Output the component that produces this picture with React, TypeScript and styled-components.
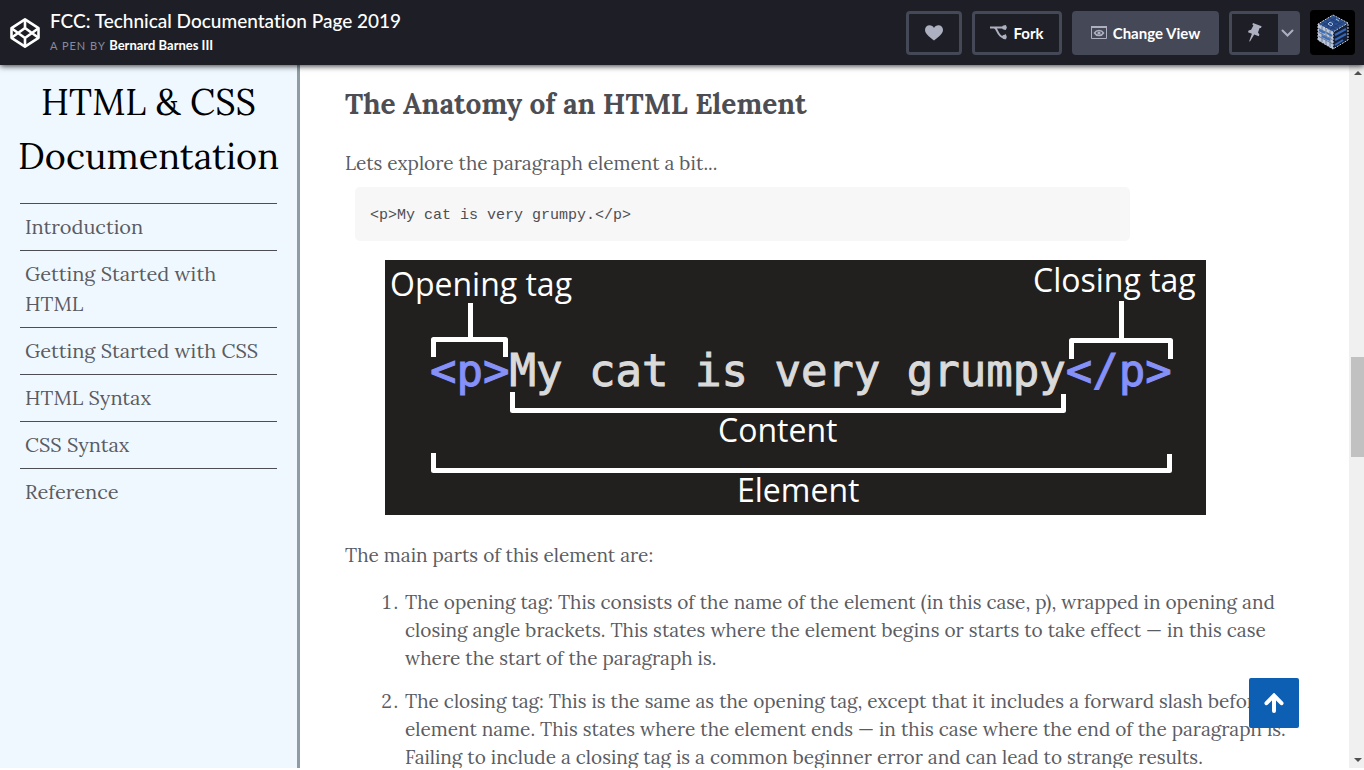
import React from "react";
import styled, { createGlobalStyle } from "styled-components";

const serif = `Lora, "Liberation Serif", serif`;
const sans = `Lato, "Liberation Sans", sans-serif`;

const GlobalStyle = createGlobalStyle`
  *, *::before, *::after { box-sizing: border-box; }
  body { margin: 0; background: #fff; }
  h1, h2, p, ul, ol, pre, figure { margin: 0; padding: 0; }
  button { font: inherit; cursor: pointer; }
`;

const Page = styled.div`
  height: 100vh;
  display: flex;
  flex-direction: column;
  overflow: hidden;
  padding-bottom: 2px;
`;

const TopBar = styled.header`
  flex: none;
  height: 65px;
  display: flex;
  align-items: center;
  justify-content: space-between;
  padding: 0 9px 0 10px;
  background: #1e1f26;
  box-shadow: 0 1px 6px rgba(0, 0, 0, 0.8);
  font-family: ${sans};
  font-variant-ligatures: none;
  color: #fff;
  z-index: 1;
`;

const Brand = styled.div`
  display: flex;
  align-items: center;
  gap: 10px;
`;

const LogoLink = styled.a`
  display: flex;
  color: #fff;
`;

const PenTitle = styled.h1`
  font-size: 19px;
  line-height: 24px;
  font-weight: 500;
`;

const Byline = styled.p`
  font-size: 11px;
  line-height: 20px;
  letter-spacing: 1px;
  margin-top: 2px;
  color: #868ca0;
`;

const Author = styled.a`
  font-size: 13px;
  letter-spacing: 0;
  font-weight: 700;
  color: #fff;
  text-decoration: none;
`;

const Actions = styled.div`
  display: flex;
  align-items: center;
  gap: 10px;
`;

const BarButton = styled.button<{ $filled?: boolean; $width: number }>`
  display: flex;
  align-items: center;
  justify-content: center;
  gap: 6px;
  width: ${(p) => p.$width}px;
  height: 44px;
  padding: 0;
  border: 3px solid #444857;
  border-radius: 4px;
  background: ${(p) => (p.$filled ? "#444857" : "#1e1f26")};
  color: #fff;
  font-size: 15px;
  font-weight: 700;

  svg { color: #adb0c0; }
`;

const Split = styled.div`
  display: flex;
  width: 71px;
  height: 44px;
  border: 3px solid #444857;
  border-radius: 4px;
  background: #444857;
`;

const SplitPart = styled.button<{ $dark?: boolean }>`
  display: flex;
  align-items: center;
  justify-content: center;
  flex: ${(p) => (p.$dark ? "1" : "0 0 19px")};
  padding: 0;
  border: 0;
  background: ${(p) => (p.$dark ? "#1e1f26" : "#444857")};
  color: #adb0c0;
`;

const Avatar = styled.button`
  display: flex;
  width: 45px;
  height: 45px;
  padding: 0;
  border: 0;
  border-radius: 4px;
  background: #000;
  overflow: hidden;
`;

const Body = styled.div`
  flex: 1;
  min-height: 0;
  display: flex;
`;

const Sidebar = styled.nav`
  flex: none;
  width: 300px;
  padding: 10px 20px;
  border-right: 3px solid #8f9ca3;
  background: #f0f8ff;
  font-family: ${serif};
`;

const SidebarTitle = styled.h2`
  margin: 0 -5px 20px;
  font-size: 36px;
  line-height: 54px;
  font-weight: 400;
  text-align: center;
  color: #000;
`;

const NavList = styled.ul`
  list-style: none;
`;

const NavItem = styled.li`
  padding: 8px 5px;
  border-top: 1px solid #4d4e53;
`;

const NavLink = styled.a`
  font-size: 20px;
  line-height: 30px;
  color: #5b5c62;
  text-decoration: none;
  display: block;
`;

const Main = styled.main`
  flex: 1;
  min-width: 0;
  padding: 20px 40px 0 45px;
  overflow: hidden;
  background: #fff;
  font-family: ${serif};
  color: #5b5c62;
`;

const SectionTitle = styled.h2`
  font-size: 28px;
  line-height: 38px;
  font-weight: 700;
  color: #4d4e53;
  margin-bottom: 26px;
`;

const Text = styled.p`
  font-size: 19px;
  line-height: 28px;
`;

const CodeBlock = styled.pre`
  max-width: 775px;
  margin: 10px 10px 19px;
  padding: 19px 15px 15px;
  border-radius: 5px;
  background: #f7f7f7;
  color: #4d4e53;
  font-family: Consolas, "Liberation Mono", monospace;
  font-size: 15px;
  line-height: 20px;
`;

const Figure = styled.figure`
  max-width: 821px;
  margin: 0 0 26px 40px;

  svg { display: block; width: 100%; height: auto; }
`;

const Parts = styled.ol`
  margin-top: 19px;
  padding-left: 60px;
  font-size: 19px;
  line-height: 28px;

  li { margin-bottom: 15px; }
`;

const Scrollbar = styled.div`
  flex: none;
  width: 15px;
  display: flex;
  flex-direction: column;
  align-items: flex-end;
  padding: 5px 0;
  background: #f0f0f0;

  svg { margin-right: 2px; }
`;

const TrackSpace = styled.div<{ $grow: number }>`
  flex: ${(p) => p.$grow} 1 0;
`;

const Thumb = styled.div`
  width: 13px;
  height: 100px;
  background: #c1c1c1;
`;

const ToTop = styled.a`
  position: fixed;
  right: 65px;
  bottom: 42px;
  width: 50px;
  height: 50px;
  display: flex;
  align-items: center;
  justify-content: center;
  border-radius: 2px;
  background: #0d5fb3;
`;

const Logo = () => (
  <svg width="30" height="32" viewBox="0 0 30 32" fill="none" stroke="currentColor" strokeWidth="2.600" strokeLinejoin="round">
    <path d="M15 2.300 28.500 11.200V20.800L15 29.700 1.500 20.800V11.200Z" />
    <path d="M15 2.500V11M15 21V29.500M1.500 11.200 15 21 28.500 11.200M1.500 20.800 15 11 28.500 20.800" />
  </svg>
);

const Heart = () => (
  <svg width="18" height="16" viewBox="0 0 18 16" fill="currentColor">
    <path d="M9 15.500C7 13.500 0 9.500 0 5 0 2.200 2.100.300 4.500.300 6.500.300 8.200 1.400 9 3 9.800 1.400 11.500.300 13.500.300 15.900.300 18 2.200 18 5c0 4.500-7 8.500-9 10.500Z" />
  </svg>
);

const ForkIcon = () => (
  <svg width="17" height="15" viewBox="0 0 17 15" fill="none" stroke="currentColor" strokeWidth="2">
    <path d="M0 2.500H13M4 2.500C7.500 2.500 7.500 12 13 12" />
    <path d="M11 2.500 16 0V5ZM11 12 16 9V14.500Z" fill="currentColor" stroke="none" />
    <circle cx="14.500" cy="2.500" r="2.300" fill="currentColor" stroke="none" />
    <circle cx="14.500" cy="12" r="2.300" fill="currentColor" stroke="none" />
  </svg>
);

const ViewIcon = () => (
  <svg width="16" height="13" viewBox="0 0 16 13" fill="none" stroke="currentColor">
    <path d="M.500 1.500H15.500V12.500H.500Z" />
    <path d="M0 1H16" strokeWidth="2" />
    <path d="M3.500 7C5.500 3.700 10.500 3.700 12.500 7 10.500 10.300 5.500 10.300 3.500 7Z" strokeWidth="1.500" />
    <circle cx="8" cy="7" r="1.600" fill="currentColor" stroke="none" />
  </svg>
);

const PinIcon = () => (
  <svg width="14" height="19" viewBox="0 0 14 19" fill="currentColor">
    <path d="M5 0 13.600 3.200 13 5 11.600 4.900 10 9.400 11.400 11.500 10.800 13.200 6.200 11.600 2 18.500 1.200 18.200 3.900 10.800 0 9.300.600 7.600 3.100 6.800 5.400 2.400 4.400 1.500Z" />
  </svg>
);

const Chevron = () => (
  <svg width="13" height="8" viewBox="0 0 13 8" fill="none" stroke="currentColor" strokeWidth="2" strokeLinecap="round">
    <path d="M1.500 1.500 6.500 6.500 11.500 1.500" />
  </svg>
);

const Cube = () => (
  <svg width="45" height="45" viewBox="0 0 45 45">
    <path d="M23 5 38 13 23 22 8 14Z" fill="#2b4f8f" />
    <path d="M8 14 23 22V39L8 30Z" fill="#b9c6dc" />
    <path d="M38 13 23 22V39L38 30Z" fill="#14203a" />
    <path d="M12 12 27 20M15 10 30 18M19 8 34 16M27 7 12 16M31 9 16 18M34 11 19 20" stroke="#1f3f78" strokeWidth="1" />
    <path d="M18 14 20 12 23 14 21 16ZM26 9 29 11" stroke="#a9bde0" strokeWidth="1" fill="none" />
    <path d="M8 18 23 26M8 22 23 30M8 26 23 34M12 16V32M16 18V35M20 20V37" stroke="#6a7a96" strokeWidth="1" />
    <path d="M9 20 15 23M12 26 20 30M17 23 22 26" stroke="#3f6fb8" strokeWidth="2" />
    <path d="M25 25 36 19M25 30 36 24M25 35 33 30" stroke="#3767b5" strokeWidth="2" />
    <path d="M23 5 38 13V30L23 39 8 30V14ZM8 14 23 22 38 13M23 22V39" fill="none" stroke="#c7ccd6" strokeWidth="1" strokeDasharray="2 1" />
  </svg>
);

const ElementDiagram = () => (
  <svg viewBox="0 0 821 255" role="img" aria-label="Parts of an HTML element">
    <rect width="821" height="255" fill="#221f1f" />
    <g fill="none" stroke="#fff" strokeWidth="5" strokeLinejoin="round">
      <path d="M48.500 97V79.500H120.500V97M85.500 43V79.500" />
      <path d="M686.500 99V80.500H785.500V99M736.500 41V80.500" />
      <path d="M127.500 132V150.500H678.500V134" />
      <path d="M48.500 193V210.500H784.500V194" />
    </g>
    <g fill="#fff" fontFamily="'Open Sans', sans-serif" fontSize="32">
      <text x="5" y="36">Opening tag</text>
      <text x="648" y="32">Closing tag</text>
      <text x="333" y="182">Content</text>
      <text x="352" y="242">Element</text>
    </g>
    <g fontFamily="'DejaVu Sans Mono', monospace" fontSize="44" strokeWidth="1">
      <text x="45" y="126" fill="#dadada" stroke="#dadada">
        <tspan fill="#8590f8" stroke="#8590f8">{"<p>"}</tspan>My cat is very grumpy<tspan fill="#8590f8" stroke="#8590f8">{"</p>"}</tspan>
      </text>
    </g>
  </svg>
);

const links: { id: string; label: string }[] = [
  { id: "introduction", label: "Introduction" },
  { id: "start-html", label: "Getting Started with HTML" },
  { id: "start-css", label: "Getting Started with CSS" },
  { id: "html-syntax", label: "HTML Syntax" },
  { id: "css-syntax", label: "CSS Syntax" },
  { id: "reference", label: "Reference" },
];

export default function App() {
  return (
    <Page>
      <GlobalStyle />
      <TopBar>
        <Brand>
          <LogoLink href="#home" aria-label="Home"><Logo /></LogoLink>
          <div>
            <PenTitle>FCC: Technical Documentation Page 2019</PenTitle>
            <Byline>A PEN BY <Author href="#author">Bernard Barnes III</Author></Byline>
          </div>
        </Brand>
        <Actions>
          <BarButton $width={56} aria-label="Love"><Heart /></BarButton>
          <BarButton $width={90}><ForkIcon />Fork</BarButton>
          <BarButton $width={147} $filled><ViewIcon />Change View</BarButton>
          <Split>
            <SplitPart $dark aria-label="Pin"><PinIcon /></SplitPart>
            <SplitPart aria-label="More pin options"><Chevron /></SplitPart>
          </Split>
          <Avatar aria-label="Account"><Cube /></Avatar>
        </Actions>
      </TopBar>
      <Body>
        <Sidebar>
          <SidebarTitle>HTML &amp; CSS Documentation</SidebarTitle>
          <NavList>
            {links.map((l) => (
              <NavItem key={l.id}><NavLink href={`#${l.id}`}>{l.label}</NavLink></NavItem>
            ))}
          </NavList>
        </Sidebar>
        <Main>
          <SectionTitle>The Anatomy of an HTML Element</SectionTitle>
          <Text>Lets explore the paragraph element a bit...</Text>
          <CodeBlock>{"<p>My cat is very grumpy.</p>"}</CodeBlock>
          <Figure><ElementDiagram /></Figure>
          <Text>The main parts of this element are:</Text>
          <Parts>
            <li>
              The opening tag: This consists of the name of the element (in this case, p), wrapped in opening and
              closing angle brackets. This states where the element begins or starts to take effect — in this case
              where the start of the paragraph is.
            </li>
            <li>
              The closing tag: This is the same as the opening tag, except that it includes a forward slash before the
              element name. This states where the element ends — in this case where the end of the paragraph is.
              Failing to include a closing tag is a common beginner error and can lead to strange results.
            </li>
          </Parts>
        </Main>
        <Scrollbar aria-hidden="true">
          <svg width="8" height="6" viewBox="0 0 8 6" fill="#505050"><path d="M0 5 4 1 8 5Z" /></svg>
          <TrackSpace $grow={281} />
          <Thumb />
          <TrackSpace $grow={300} />
          <svg width="8" height="6" viewBox="0 0 8 6" fill="#505050"><path d="M0 1 4 5 8 1Z" /></svg>
        </Scrollbar>
      </Body>
      <ToTop href="#top" aria-label="Back to top">
        <svg width="20" height="20" viewBox="0 0 20 20" fill="none" stroke="#fff" strokeWidth="4" strokeLinecap="round">
          <path d="M10 18V3M2.500 10.200 10 2.500 17.500 10.200" />
        </svg>
      </ToTop>
    </Page>
  );
}
